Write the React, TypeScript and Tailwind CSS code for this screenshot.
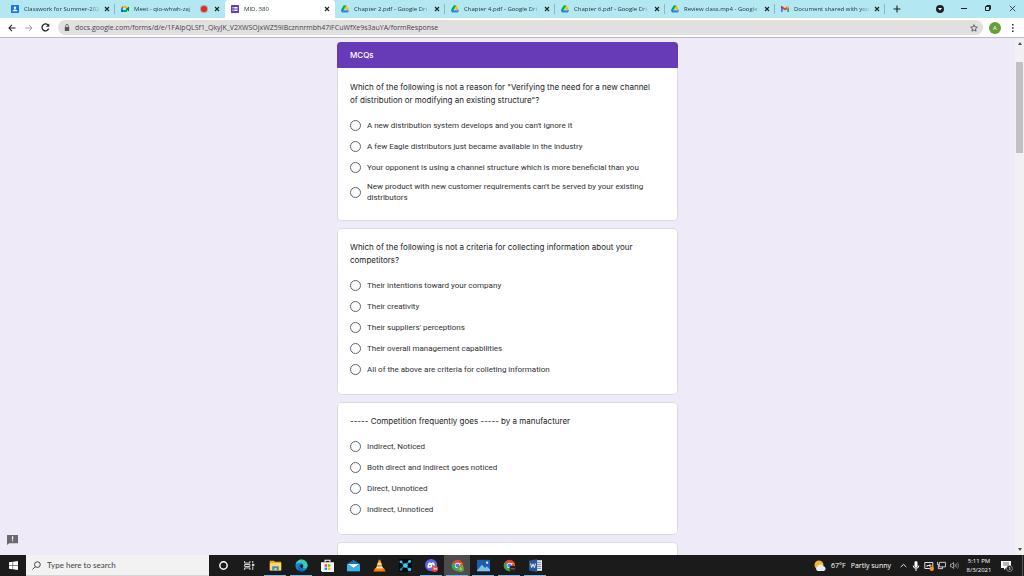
import type { ReactNode } from 'react';

type Tab = { title: string; icon: ReactNode; active?: boolean; recording?: boolean; divider?: boolean };

const url = 'docs.google.com/forms/d/e/1FAIpQLSf1_QkyJK_V2XWSOjxWZ59IBcznnrmbh47iFCuWfXe9s3auYA/formResponse';

const questions = [
  {
    section: 'MCQs',
    text: 'Which of the following is not a reason for "Verifying the need for a new channel of distribution or modifying an existing structure"?',
    options: [
      "A new distribution system develops and you can't ignore it",
      'A few Eagle distributors just became available in the industry',
      'Your opponent is using a channel structure which is more beneficial than you',
      "New product with new customer requirements can't be served by your existing distributors",
    ],
  },
  {
    text: 'Which of the following is not a criteria for collecting information about your competitors?',
    options: [
      'Their intentions toward your company',
      'Their creativity',
      "Their suppliers' perceptions",
      'Their overall management capabilities',
      'All of the above are criteria for colleting information',
    ],
  },
  {
    text: '----- Competition frequently goes ----- by a manufacturer',
    options: ['Indirect, Noticed', 'Both direct and indirect goes noticed', 'Direct, Unnoticed', 'Indirect, Unnoticed'],
  },
];

function DriveIcon() {
  return (
    <svg viewBox="0 0 87.3 78" className="size-2">
      <path d="m6.6 66.85 3.85 6.65c.8 1.4 1.95 2.5 3.3 3.3l13.75-23.8H0c0 1.55.4 3.1 1.2 4.5z" fill="#0066da" />
      <path d="M43.65 25 29.9 1.2c-1.35.8-2.5 1.9-3.3 3.3l-25.4 44A9.06 9.06 0 0 0 0 53h27.5z" fill="#00ac47" />
      <path d="M73.55 76.8c1.35-.8 2.5-1.9 3.3-3.3l9.25-16c.8-1.4 1.2-2.95 1.2-4.5H59.8l5.85 11.5z" fill="#2673e8" />
      <path d="M43.65 25 57.4 1.2C56.05.4 54.5 0 52.9 0H34.4c-1.6 0-3.15.45-4.5 1.2z" fill="#00832d" />
      <path d="M59.8 53H27.5L13.75 76.8c1.35.8 2.9 1.2 4.5 1.2h50.8c1.6 0 3.15-.45 4.5-1.2z" fill="#2684fc" />
      <path d="m73.4 26.5-12.7-22c-.8-1.4-1.95-2.5-3.3-3.3L43.65 25 59.8 53h27.45c0-1.55-.4-3.1-1.2-4.5z" fill="#ffba00" />
    </svg>
  );
}

function ClassroomIcon() {
  return (
    <svg viewBox="0 0 16 16" className="size-2">
      <rect width="16" height="16" rx="1.5" fill="#1a73e8" />
      <circle cx="8" cy="5.5" r="2.4" fill="#fff" />
      <path d="M3.2 12.5c0-2.5 2.4-3.6 4.8-3.6s4.8 1.1 4.8 3.6z" fill="#fff" />
    </svg>
  );
}

function MeetIcon() {
  return (
    <svg viewBox="0 0 18 16" className="size-2">
      <path d="M0 5.5 4.5 1v4.5z" fill="#ea4335" />
      <path d="M0 5.5h4.5v5H0z" fill="#2684fc" />
      <path d="M0 10.5h4.5V15h-3A1.5 1.5 0 0 1 0 13.5z" fill="#0066da" />
      <path d="M4.5 1H12a1.5 1.5 0 0 1 1.5 1.5V8L10 5.5H4.5z" fill="#ffba00" />
      <path d="M4.5 10.5H10L13.5 8v5.5A1.5 1.5 0 0 1 12 15H4.5z" fill="#00ac47" />
      <path d="m11 8 6-5q1-.6 1 .5v9q0 1.1-1 .5z" fill="#00832d" />
    </svg>
  );
}

function FormsIcon() {
  return (
    <svg viewBox="0 0 16 16" className="size-2">
      <rect width="16" height="16" rx="1" fill="#673ab7" />
      <path d="M3 4h2v2H3zm3.5 0H13v2H6.5zM3 7h2v2H3zm3.5 0H13v2H6.5zM3 10h2v2H3zm3.5 0H13v2H6.5z" fill="#fff" />
    </svg>
  );
}

function GmailIcon() {
  return (
    <svg viewBox="0 0 16 12" className="size-2">
      <path d="M0 2v9a1 1 0 0 0 1 1h2.6V4.7z" fill="#4285f4" />
      <path d="M16 2v9a1 1 0 0 1-1 1h-2.6V4.7z" fill="#34a853" />
      <path d="M12.4 1.2 14 .3c1-.6 2 .2 2 1.3v1.5l-3.6 2.7z" fill="#fbbc04" />
      <path d="M3.6 1.2 2 .3C1-.3 0 .5 0 1.6v1.5l3.6 2.7z" fill="#c5221f" />
      <path d="M3.6 1.2 8 4.5l4.4-3.3v4.6L8 9.1 3.6 5.8z" fill="#ea4335" />
    </svg>
  );
}

const tabs: Tab[] = [
  { title: 'Classwork for Summer-202', icon: <ClassroomIcon />, divider: true },
  { title: 'Meet - qio-whwh-zaj', icon: <MeetIcon />, recording: true },
  { title: 'MID, 380', icon: <FormsIcon />, active: true },
  { title: 'Chapter 2.pdf - Google Dri', icon: <DriveIcon />, divider: true },
  { title: 'Chapter 4.pdf - Google Dri', icon: <DriveIcon />, divider: true },
  { title: 'Chapter 6.pdf - Google Dri', icon: <DriveIcon />, divider: true },
  { title: 'Review class.mp4 - Google', icon: <DriveIcon />, divider: true },
  { title: 'Document shared with you', icon: <GmailIcon />, divider: true },
];

function CloseIcon() {
  return (
    <svg viewBox="0 0 6 6" className="size-[6px]" stroke="#222" strokeWidth="1.1">
      <path d="m1 1 4 4M5 1 1 5" />
    </svg>
  );
}

function TabStrip() {
  return (
    <div className="flex h-[18px] items-stretch bg-[#b3e7f2] pl-[5px]">
      <div className="flex min-w-0 flex-1" role="tablist">
        {tabs.map((tab) => (
          <div
            key={tab.title}
            className={
              tab.active
                ? 'flex w-[110px] min-w-0 items-center rounded-t-[4px] bg-white'
                : 'flex w-[110px] min-w-0 items-center'
            }
          >
            <button role="tab" aria-selected={!!tab.active} className="flex h-full min-w-0 flex-1 items-center gap-[5px] pl-[6px] text-left">
              <span className="shrink-0">{tab.icon}</span>
              <span className="min-w-0 flex-1 overflow-hidden whitespace-nowrap text-[6px] leading-[10px] text-[#22343a] [mask-image:linear-gradient(to_right,black_85%,transparent)]">
                {tab.title}
              </span>
              {tab.recording ? <span className="mr-1 size-[6px] shrink-0 rounded-full bg-[#d93025] ring-1 ring-[#d93025]/40" /> : null}
            </button>
            <button aria-label="Close tab" className="mr-px flex w-3 shrink-0 items-center justify-center">
              <CloseIcon />
            </button>
            <span className={tab.divider ? 'h-[10px] w-px shrink-0 bg-[#8fb6bf]' : 'w-px shrink-0'} />
          </div>
        ))}
        <button aria-label="New tab" className="flex w-6 items-center justify-center">
          <svg viewBox="0 0 8 8" className="size-2" stroke="#222" strokeWidth="1.1">
            <path d="M4 .5v7M.5 4h7" />
          </svg>
        </button>
      </div>
      <div className="flex shrink-0">
        <button aria-label="Search tabs" className="flex w-6 items-center justify-center">
          <svg viewBox="0 0 8 8" className="size-2">
            <circle cx="4" cy="4" r="4" fill="#1d2427" />
            <path d="M2 3h4L4 5.5z" fill="#fff" />
          </svg>
        </button>
        <button aria-label="Minimize" className="flex w-6 items-center justify-center pb-[2px]">
          <span className="h-px w-[6px] bg-[#222]" />
        </button>
        <button aria-label="Restore" className="flex w-6 items-center justify-center pb-[2px]">
          <svg viewBox="0 0 6 6" className="size-[6px]" fill="none" stroke="#222">
            <path d="M.5 1.5h4v4h-4zM1.5.5h4v4" />
          </svg>
        </button>
        <button aria-label="Close" className="flex w-6 items-center justify-center pb-[2px]">
          <svg viewBox="0 0 7 7" className="size-[7px]" stroke="#222" strokeWidth=".8">
            <path d="m.8.8 5.4 5.4M6.2.8.8 6.2" />
          </svg>
        </button>
      </div>
    </div>
  );
}

function Toolbar() {
  return (
    <div className="flex h-5 items-center border-b border-[#bdbdc1] bg-white pl-[3px]">
      <button aria-label="Back" className="flex w-[17px] justify-center">
        <svg viewBox="0 0 10 10" className="size-2" fill="none" stroke="#222" strokeWidth="1.3">
          <path d="M9.5 5h-8M5 1.200 1.200 5 5 8.800" />
        </svg>
      </button>
      <button aria-label="Forward" className="flex w-[17px] justify-center">
        <svg viewBox="0 0 10 10" className="size-2" fill="none" stroke="#999" strokeWidth="1.2">
          <path d="M.5 5h8M5 1.200 8.800 5 5 8.800" />
        </svg>
      </button>
      <button aria-label="Reload" className="flex w-[17px] justify-center">
        <svg viewBox="0 0 10 10" className="size-[9px]" fill="none" stroke="#222" strokeWidth="1.4">
          <path d="M8.500 6.200A3.800 3.800 0 1 1 7.800 2.400" />
          <path d="M9.200.6v3.700H5.500z" fill="#222" stroke="none" />
        </svg>
      </button>
      <div className="ml-1 flex h-[15px] flex-1 items-center gap-[5px] rounded-full bg-[#e0e0e0] pl-[6px] pr-[5px]">
        <svg viewBox="0 0 6 8" className="h-[7px] w-[6px] shrink-0">
          <path d="M.5 3.500h5V8h-5z" fill="#555" />
          <path d="M1.500 4V2a1.500 1.500 0 0 1 3 0v2" fill="none" stroke="#555" strokeWidth=".9" />
        </svg>
        <input
          aria-label="Address"
          defaultValue={url}
          className="min-w-0 flex-1 bg-transparent text-[7px] leading-[12px] text-[#444] outline-none"
        />
        <button aria-label="Bookmark">
          <svg viewBox="0 0 10 10" className="size-2" fill="none" stroke="#444" strokeWidth="1">
            <path d="m5 .9 1.200 2.800 3 .3-2.300 2 .7 3L5 7.400 2.400 9l.7-3L.8 4l3-.3z" />
          </svg>
        </button>
      </div>
      <button aria-label="Profile" className="ml-[6px] flex size-3 items-center justify-center rounded-full bg-[#689f38] text-[6px] leading-[10px] text-white">
        A
      </button>
      <button aria-label="Menu" className="flex w-[23px] justify-center">
        <svg viewBox="0 0 2 8" className="h-2 w-[2px]" fill="#333">
          <path d="M0 0h1.600v1.600H0zM0 3.200h1.600v1.600H0zM0 6.400h1.600V8H0z" />
        </svg>
      </button>
    </div>
  );
}

function QuestionCard({ id, section, text, options }: { id: string; section?: string; text: string; options: string[] }) {
  return (
    <section>
      {section ? (
        <h2 className="rounded-t-[4px] bg-[#673ab7] px-[13px] py-[6px] font-[Inter,sans-serif] text-[8px] font-medium leading-[14px] text-white">
          {section}
        </h2>
      ) : null}
      <fieldset
        className={
          section
            ? 'rounded-b-[4px] border border-t-white border-[#dadce0] bg-white pb-[14px] pl-3 pr-5 pt-3'
            : 'rounded-[4px] border border-[#dadce0] bg-white pb-[14px] pl-3 pr-5 pt-3'
        }
      >
        <legend className="float-left w-full font-[Inter,sans-serif] text-[8px] leading-[13px] text-[#202124]">{text}</legend>
        <div className="clear-both pt-2">
          {options.map((option) => (
            <label key={option} className="flex min-h-[21px] items-center gap-[6px] py-[3px] text-[8px] leading-[11px] text-[#303134]">
              <input
                type="radio"
                name={id}
                className="size-[11px] shrink-0 appearance-none rounded-full border border-[#5f6368] bg-white checked:border-4 checked:border-[#673ab7]"
              />
              <span>{option}</span>
            </label>
          ))}
        </div>
      </fieldset>
    </section>
  );
}

function Page() {
  return (
    <div className="flex min-h-0 flex-1 bg-[#eeeaf8]">
      <main className="relative min-w-0 flex-1 overflow-hidden">
        <form className="mx-auto flex w-full max-w-[341px] flex-col gap-[7px] pt-1 font-[Roboto,sans-serif]">
          {questions.map((question, index) => (
            <QuestionCard key={question.text} id={`question-${index}`} {...question} />
          ))}
          <section className="h-20 rounded-[4px] border border-[#dadce0] bg-white" />
        </form>
        <button aria-label="Report a problem" className="absolute bottom-[10px] left-[7px]">
          <svg viewBox="0 0 12 12" className="size-[11px]">
            <path d="M0 1h12v9H2.500L0 12z" fill="#6b6870" />
            <path d="M5.400 2.500h1.300V6H5.400zm0 4.300h1.300V8H5.400z" fill="#fff" />
          </svg>
        </button>
      </main>
      <div className="flex w-[9px] flex-col items-center justify-between bg-[#f1f1f1] py-1">
        <svg viewBox="0 0 4 3" className="h-[3px] w-1" fill="#505050">
          <path d="M0 3h4L2 0z" />
        </svg>
        <div className="mb-auto mt-[17px] h-[91px] w-[7px] bg-[#c1c1c1]" />
        <svg viewBox="0 0 4 3" className="h-[3px] w-1" fill="#505050">
          <path d="M0 0h4L2 3z" />
        </svg>
      </div>
    </div>
  );
}

function ChromeDisc() {
  return (
    <>
      <circle cx="8" cy="8" r="7" fill="#ea4335" />
      <path d="M8 8 1.900 4.500A7 7 0 0 0 8 15l3-5z" fill="#34a853" />
      <path d="M8 8h6.900A7 7 0 0 1 8 15l3-5.500-1-4.500h4.300z" fill="#fbbc04" />
      <circle cx="8" cy="8" r="3.300" fill="#fff" />
      <circle cx="8" cy="8" r="2.600" fill="#4285f4" />
    </>
  );
}

const apps: { name: string; open?: boolean; active?: boolean; art: ReactNode }[] = [
  { name: 'Cortana', art: <circle cx="8" cy="8" r="4.500" fill="none" stroke="#fff" strokeWidth="1.800" /> },
  {
    name: 'Task view',
    art: (
      <>
        <path d="M2 2.500V5h6.500V2.500M2 13.500V11h6.500v2.500M2 6.800h6.500v2.400H2z" fill="none" stroke="#ddd" strokeWidth="1.200" />
        <path d="M12 2.500V5M12 9v4.500" stroke="#ddd" strokeWidth="1.200" />
        <path d="M11 6h3v2.500h-3z" fill="#ddd" />
      </>
    ),
  },
  {
    name: 'File Explorer',
    open: true,
    art: (
      <>
        <path d="M1 2h5l1.500 1.500H15V14H1z" fill="#e8a823" />
        <path d="M1 5h14v9H1z" fill="#ffd868" />
        <path d="M4 14V9h8v5H9.500v-2.500h-3V14z" fill="#2f8fd8" />
      </>
    ),
  },
  {
    name: 'Edge',
    open: true,
    art: (
      <>
        <circle cx="8" cy="8" r="7.500" fill="#1583d2" />
        <path d="M.6 7A7.500 7.500 0 0 1 15.500 8c0 2.500-2 3.500-4 3.500-1.700 0-2-.8-1.300-1.800C11.300 7.500 9.500 5 6.500 5 3.500 5 1.200 6 .6 7z" fill="#3ccbb0" />
        <path d="M6 7.500c-1.500 3 .5 6.500 4.500 6.500 1.500 0 3-.5 4-1.500A7.500 7.500 0 0 1 8 15.500C4 15.500 3 10 6 7.500z" fill="#0c59a4" />
        <path d="M6.800 7.200c1.500-1 3.500.3 3.200 2-.4 1-1 2 0 2.800-3 0-4.500-3-3.200-4.800z" fill="#18232a" />
      </>
    ),
  },
  {
    name: 'Store',
    art: (
      <>
        <path d="M5 4V1.500h6V4" fill="none" stroke="#fff" strokeWidth="1.300" />
        <path d="M0 4h16v12H1.500L0 14z" fill="#f5f5f5" />
        <path d="M4.500 6.500h3v3h-3z" fill="#f25022" />
        <path d="M8.500 6.500h3v3h-3z" fill="#7fba00" />
        <path d="M4.500 10.500h3v3h-3z" fill="#00a4ef" />
        <path d="M8.500 10.500h3v3h-3z" fill="#ffb900" />
      </>
    ),
  },
  {
    name: 'Mail',
    art: (
      <>
        <path d="M0 6 8 1l8 5v9H0z" fill="#1370bd" />
        <path d="M1 6h14l-7 5z" fill="#fff" />
        <path d="m0 6 8 5.500L16 6v9H0z" fill="#35b5f1" />
      </>
    ),
  },
  {
    name: 'VLC',
    art: (
      <>
        <path d="M2.500 11h11l2 4.500H.5z" fill="#f57c00" />
        <path d="M7 1h2l3.500 11.500q-4.500 2-9 0z" fill="#ff8a0f" />
        <path d="m6 4.500-.8 2.500h5.600L10 4.500zM4.500 9.500l-.6 2h8.200l-.6-2z" fill="#f4f4f4" />
      </>
    ),
  },
  {
    name: 'Network tool',
    art: (
      <>
        <path d="M0 0h16v16H0z" fill="#05090c" />
        <path d="m2 3 5 5-5 5M7 8l6-5M7 8l6 5" fill="none" stroke="#2488b0" strokeWidth="1.500" />
        <circle cx="2.500" cy="3.500" r="1.800" fill="#3cc4f5" />
        <circle cx="13" cy="3" r="1.800" fill="#3cc4f5" />
        <circle cx="8" cy="8" r="2.800" fill="#48c9f6" />
        <circle cx="2.500" cy="13" r="1.600" fill="#1d87b8" />
        <circle cx="13" cy="13" r="2.200" fill="#3cc4f5" />
      </>
    ),
  },
  {
    name: 'Discord',
    open: true,
    art: (
      <>
        <circle cx="7.500" cy="7.500" r="7.500" fill="#5865f2" />
        <path d="M3 10.500c0-3 .8-5 1.500-6l2-.5.5.8h1.500L9 4l2 .5c.7 1 1.500 3 1.500 6l-2.500 1-.7-1H6l-.7 1z" fill="#fff" />
        <circle cx="6" cy="8" r="1" fill="#5865f2" />
        <circle cx="9.300" cy="8" r="1" fill="#5865f2" />
        <circle cx="12" cy="12" r="4" fill="#e5484d" />
        <path d="M10 11h1.500v2.500M12.500 12h2.500M13.700 10.800v2.500" stroke="#fff" strokeWidth=".8" fill="none" />
      </>
    ),
  },
  {
    name: 'Chrome',
    open: true,
    active: true,
    art: (
      <>
        <ChromeDisc />
        <circle cx="12" cy="12" r="4" fill="#689f38" />
        <path d="m10.800 13.500 1.200-3 1.200 3" fill="none" stroke="#dce9ce" strokeWidth=".8" />
      </>
    ),
  },
  {
    name: 'Photos',
    open: true,
    art: (
      <>
        <path d="M0 1h16v14H0z" fill="#1b5fae" />
        <path d="m0 14 6-7 4 4 2-2 4 4v2H0z" fill="#7cc0f0" />
        <circle cx="12.500" cy="4.500" r="1.400" fill="#e8f5ff" />
      </>
    ),
  },
  {
    name: 'Chrome profile',
    open: true,
    art: (
      <>
        <ChromeDisc />
        <circle cx="12" cy="12" r="4" fill="#29211c" />
        <path d="M9.500 12h5" stroke="#94704a" strokeWidth="1.200" />
      </>
    ),
  },
  {
    name: 'Word',
    open: true,
    art: (
      <>
        <path d="M7 1.500h9v13H7z" fill="#f3f6fb" />
        <path d="M10 4h5M10 6.500h5M10 9h5M10 11.500h5" stroke="#2b579a" strokeWidth=".9" />
        <path d="M0 2 10 0v16L0 14z" fill="#2b579a" />
        <path d="m2 5.500 1.300 5L5 6l1.700 4.500L8 5.500" fill="none" stroke="#fff" strokeWidth="1.100" />
      </>
    ),
  },
];

function Taskbar() {
  return (
    <footer className="flex h-[21px] items-stretch bg-[#1b1b1b] text-white">
      <button aria-label="Start" className="flex w-[26px] items-center justify-center">
        <svg viewBox="0 0 16 16" className="size-[9px]" fill="#fff">
          <path d="M0 2.300 6.500 1.400v6.200H0zM7.300 1.300 16 0v7.600H7.300zM0 8.400h6.500v6.200L0 13.700zM7.300 8.400H16V16l-8.700-1.300z" />
        </svg>
      </button>
      <div className="flex w-[183px] items-center gap-[6px] border-b border-[#d5d5d5] bg-[#f2f2f2] pl-[6px]">
        <svg viewBox="0 0 10 10" className="size-[9px] shrink-0" fill="none" stroke="#333" strokeWidth="1">
          <circle cx="6" cy="4" r="3.200" />
          <path d="M3.700 6.300.5 9.500" />
        </svg>
        <input
          aria-label="Search"
          placeholder="Type here to search"
          className="min-w-0 flex-1 bg-transparent font-[Lato,sans-serif] text-[8px] leading-[12px] text-[#333] outline-none placeholder:text-[#444]"
        />
      </div>
      <nav className="flex flex-1 pl-px">
        {apps.map((app) => (
          <button
            key={app.name}
            aria-label={app.name}
            className={
              app.active
                ? 'relative flex w-[26px] items-center justify-center bg-[#4b4d4d]'
                : 'relative flex w-[26px] items-center justify-center'
            }
          >
            <svg viewBox="0 0 16 16" className="size-[13px]">
              {app.art}
            </svg>
            {app.open ? <span className="absolute inset-x-[2px] bottom-0 h-px bg-[#76b9ed]" /> : null}
          </button>
        ))}
      </nav>
      <div className="flex items-center">
        <button className="flex items-center gap-[5px] text-[7px] leading-[12px]">
          <svg viewBox="0 0 12 12" className="size-3">
            <circle cx="5" cy="5" r="4.500" fill="#f9b233" />
            <path d="M3.500 11a2.500 2.500 0 0 1 0-4.500 3.300 3.300 0 0 1 6-.3 2.500 2.500 0 0 1 .5 4.800z" fill="#e6eef7" />
          </svg>
          <span>67°F</span>
          <span>Partly sunny</span>
        </button>
        <button aria-label="Show hidden icons" className="ml-[6px] flex w-3 justify-center">
          <svg viewBox="0 0 8 5" className="h-[5px] w-[7px]" fill="none" stroke="#fff">
            <path d="m.8 4.200 3.200-3 3.200 3" />
          </svg>
        </button>
        <button aria-label="Microphone" className="flex w-[13px] justify-center">
          <svg viewBox="0 0 8 10" className="h-[10px] w-2">
            <rect x="2.500" width="3" height="6.500" rx="1.500" fill="#fff" />
            <path d="M1.200 4.500a2.800 2.800 0 0 0 5.600 0M4 7.500V10" fill="none" stroke="#fff" />
          </svg>
        </button>
        <button aria-label="Updates" className="flex w-[13px] justify-center">
          <svg viewBox="0 0 10 10" className="size-[10px]" fill="none" stroke="#ddd">
            <path d="M.8 1.500h8v6h-8zM3 6V4.500h3.500M5.500 3l1.500 1.500L5.500 6" />
            <circle cx="7.800" cy="7.800" r="2.200" fill="#f7931e" stroke="none" />
          </svg>
        </button>
        <button aria-label="Network" className="flex w-[13px] justify-center">
          <svg viewBox="0 0 10 10" className="size-[9px]" fill="none" stroke="#ddd">
            <path d="M2.500 1.500h7v5h-7zM.5 1v3h2M1.500 4v4.500h5M6 6.500v2" />
          </svg>
        </button>
        <button aria-label="Volume" className="flex w-[13px] justify-center">
          <svg viewBox="0 0 10 10" className="size-[9px]" fill="none" stroke="#ccc" strokeWidth=".8">
            <path d="M.5 3.500H2l2-1.800v6.600L2 6.500H.5zM5.500 3.500q1 1.500 0 3" />
            <path d="M7 2.500q1.600 2.500 0 5M8.500 1.500q2.200 3.500 0 7" stroke="#888" />
          </svg>
        </button>
        <button className="flex w-9 flex-col items-center text-[6px] leading-[9px]">
          <span>5:11 PM</span>
          <span>8/3/2021</span>
        </button>
        <button aria-label="Notifications" className="flex w-5 justify-center">
          <svg viewBox="0 0 12 12" className="size-3">
            <path d="M0 1h10v7H5L3 10V8H0z" fill="#fff" />
            <path d="M2 3h6M2 5h6" stroke="#333" strokeWidth=".7" />
            <circle cx="8.500" cy="8.500" r="3" fill="#222" stroke="#aaa" strokeWidth=".7" />
            <path d="M8 7.500h.8v2.500" fill="none" stroke="#fff" strokeWidth=".7" />
          </svg>
        </button>
        <span className="ml-[5px] mr-px h-full w-px bg-[#555]" />
      </div>
    </footer>
  );
}

export default function App() {
  return (
    <div className="flex h-screen flex-col overflow-hidden font-['Open_Sans',sans-serif]">
      <TabStrip />
      <Toolbar />
      <Page />
      <Taskbar />
    </div>
  );
}
